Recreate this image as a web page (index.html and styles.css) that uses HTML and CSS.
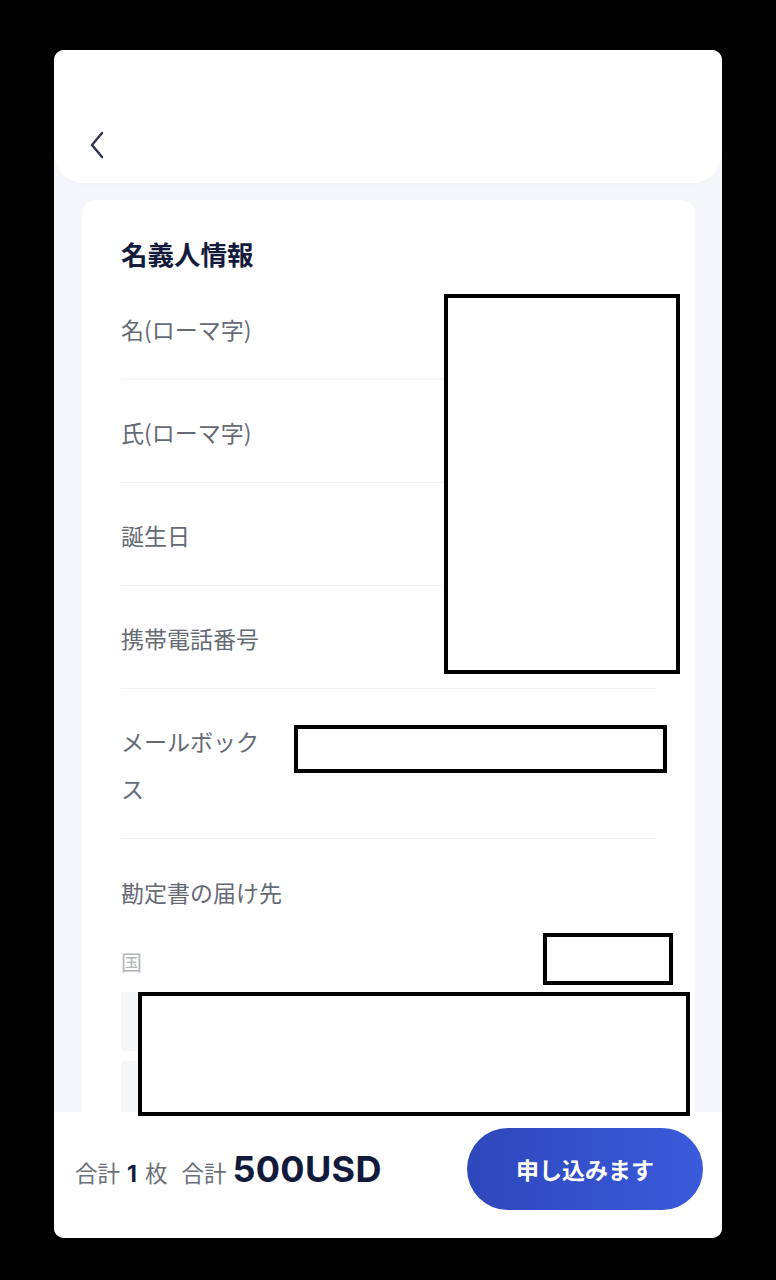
FILE: index.html
```html
<!DOCTYPE html>
<html lang="ja">
<head>
<meta charset="utf-8">
<title>名義人情報</title>
<link rel="stylesheet" href="styles.css">
</head>
<body>
<div class="panel">
  <header class="header">
    <button class="back" aria-label="戻る">
      <svg width="18" height="28" viewBox="0 0 18 28"><path d="M14 2 L4 14 L14 26" fill="none" stroke="#2e3350" stroke-width="2.4" stroke-linecap="round" stroke-linejoin="round"/></svg>
    </button>
  </header>
  <main class="content">
    <section class="card">
      <h2 class="title">名義人情報</h2>
      <div class="row"><div class="label">名(ローマ字)</div><div class="value"></div></div>
      <div class="row"><div class="label">氏(ローマ字)</div><div class="value"></div></div>
      <div class="row"><div class="label">誕生日</div><div class="value"></div></div>
      <div class="row"><div class="label">携帯電話番号</div><div class="value"></div></div>
      <div class="row"><div class="label">メールボックス</div><div class="value"></div></div>
      <div class="section-label">勘定書の届け先</div>
      <div class="field-label">国</div>
      <div class="input"></div>
      <div class="input"></div>
    </section>
  </main>
  <footer class="footer">
    <div class="total">
      <span class="muted">合計</span><span class="count">1</span><span class="muted">枚</span>
      <span class="muted gap">合計</span><span class="amount">500USD</span>
    </div>
    <button class="submit">申し込みます</button>
  </footer>
  <div class="redact r1"></div>
  <div class="redact r2"></div>
  <div class="redact r3"></div>
  <div class="redact r4"></div>
</div>
</body>
</html>
```
FILE: styles.css
```css
* { box-sizing: border-box; }
html, body { margin: 0; padding: 0; }
body {
  background: #000;
  font-family: "Noto Sans CJK JP", "Noto Sans", sans-serif;
  height: 1280px;
  overflow: hidden;
}
.panel {
  position: relative;
  margin: 50px 54px 0 54px;
  width: 668px;
  height: 1188px;
  border-radius: 10px;
  overflow: hidden;
  background: #f6f7fa;
  display: flex;
  flex-direction: column;
}
.header {
  flex: 0 0 133px;
  background: #fff;
  border-radius: 0 0 30px 30px;
  padding: 80px 0 0 33px;
  box-shadow: 0 2px 4px rgba(20, 30, 60, 0.02);
}
.back {
  border: 0;
  background: none;
  padding: 0;
  margin: 0;
  width: 20px;
  height: 30px;
  display: flex;
  align-items: center;
  justify-content: center;
}
.content {
  flex: 1;
  overflow: hidden;
  padding: 17px 27px 0 28px;
}
.card {
  background: #fff;
  border-radius: 14px;
  padding: 36px 39px 40px 39px;
}
.title {
  margin: 0 0 5px 0;
  font-size: 26.5px;
  line-height: 36px;
  font-weight: 700;
  color: #141b3c;
}
.row {
  display: flex;
  padding: 29px 0 26px 0;
  border-bottom: 1px solid #f0f1f4;
}
.label {
  width: 145px;
  font-size: 23px;
  line-height: 47px;
  color: #666a74;
}
.value { flex: 1; }
.section-label {
  padding-top: 30px;
  font-size: 23px;
  line-height: 47px;
  color: #666a74;
}
.field-label {
  margin-top: 30px;
  font-size: 21px;
  line-height: 30px;
  color: #b3b6bd;
}
.input {
  margin-top: 16px;
  height: 59px;
  background: #f5f6f8;
}
.input + .input { margin-top: 10px; }
.footer {
  flex: 0 0 126px;
  background: #fff;
  display: flex;
  align-items: center;
  justify-content: space-between;
  padding: 16px 19px 28px 21px;
}
.total {
  display: flex;
  align-items: baseline;
  white-space: nowrap;
}
.muted {
  font-size: 22.5px;
  color: #6b6f78;
}
.count {
  font-family: "Inter", "Noto Sans CJK JP", sans-serif;
  font-size: 23px;
  font-weight: 700;
  color: #141b3c;
  margin: 0 8px 0 7px;
}
.gap { margin-left: 14px; }
.amount {
  font-family: "Inter", "Noto Sans CJK JP", sans-serif;
  font-size: 36px;
  font-weight: 700;
  color: #121a3c;
  margin-left: 6px;
  letter-spacing: 0.3px;
}
.submit {
  width: 236px;
  height: 82px;
  border: 0;
  border-radius: 41px;
  background: linear-gradient(90deg, #2e47bb 0%, #3b5bdb 100%);
  color: #fff;
  font-family: "Noto Sans CJK JP", sans-serif;
  font-size: 23px;
  font-weight: 700;
}
.redact {
  position: absolute;
  background: #fff;
  border: 4px solid #000;
  z-index: 5;
}
.r1 { left: 390px; top: 244px; width: 236px; height: 380px; }
.r2 { left: 240px; top: 675px; width: 373px; height: 48px; }
.r3 { left: 489px; top: 883px; width: 130px; height: 52px; }
.r4 { left: 84px; top: 942px; width: 552px; height: 124px; }
```
